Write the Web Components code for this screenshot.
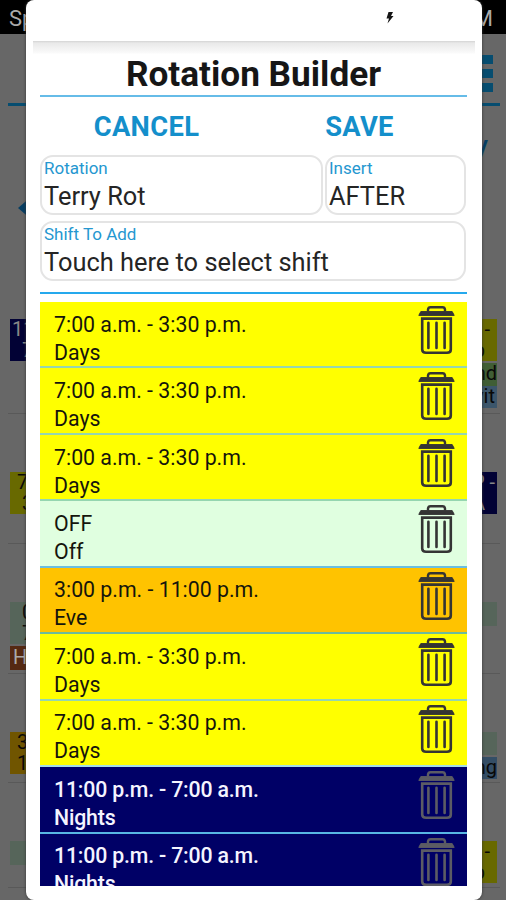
<!DOCTYPE html>
<html lang="en"><head><meta charset="utf-8"><title>Rotation Builder</title>
<style>html,body{margin:0;height:900px;overflow:hidden;background:#676767}body{font-family:Roboto,"Liberation Sans",sans-serif}</style></head>
<body>
<rotation-app></rotation-app>
<script>
class Base extends HTMLElement{
  connectedCallback(){ if(!this.shadowRoot) this.attachShadow({mode:'open'}).innerHTML=this.render(); }
  a(n,d=''){return this.getAttribute(n)??d}
}
customElements.define('trash-icon',class extends Base{render(){return `
<style>:host{display:block;width:38px;height:50px}svg{display:block}</style>
<svg width="38" height="50" viewBox="0 0 38 50" fill="none" stroke="currentColor">
<path d="M10 6.5V4.5Q10.3 2.2 12.5 2.2H24.5Q26.7 2.2 27 4.5V6.5" stroke-width="2.4"/>
<path d="M2.8 6.6H34.2L36.2 10.4H.8Z" fill="currentColor" stroke="currentColor" stroke-width="1"/>
<path d="M4.2 13.6H32.8V44.5Q32.8 47.8 29 47.8H8Q4.2 47.8 4.2 44.5Z" stroke-width="2.6"/>
<path d="M10.4 17.8V43M18.5 17.8V43M26.6 17.8V43" stroke-width="2.6" stroke-linecap="round"/>
</svg>`}});
customElements.define('shift-row',class extends Base{render(){return `
<style>:host{display:flex;justify-content:space-between;box-sizing:border-box;flex:none;height:66.45px;padding:3px 11px 0 14px;border-bottom:2px solid ${this.a('line','#95d6e0')};background:${this.a('bg')};color:${this.a('fg','#15150c')};font-size:21.3px;line-height:28px;font-weight:${this.a('weight','400')};letter-spacing:${this.a('ls','0')};white-space:nowrap}
.text{padding-top:5.7px}trash-icon{color:${this.a('icon','#343434')}}</style>
<div class="text"><div>${this.a('time')}</div><div>${this.a('name')}</div></div><trash-icon></trash-icon>`}});
customElements.define('form-field',class extends Base{render(){return `
<style>:host{display:block;box-sizing:border-box;height:60px;border:2px solid #e4e4e4;border-radius:13px;padding:1px 0 0 2px;white-space:nowrap;overflow:hidden}
.label{font-size:17px;line-height:20px;color:#2597d0}.value{font-size:25.4px;line-height:36px;color:#252525}</style>
<div class="label">${this.a('label')}</div><div class="value"><slot></slot></div>`}});
customElements.define('shift-chip',class extends Base{render(){return `
<style>:host{display:block;box-sizing:border-box;height:${this.a('h','42')}px;background:${this.a('bg')};color:${this.a('fg','#080808')};font-size:20px;line-height:21px;padding:0 2px;text-align:${this.a('align','left')};white-space:nowrap}
slot{display:block;white-space:pre}</style><slot></slot>`}});
customElements.define('week-row',class extends Base{render(){return `
<style>:host{display:flex;justify-content:space-between;box-sizing:border-box;height:${this.a('h')}px;margin:0 6px 0 8px;padding:${this.a('pt','58')}px 3px 0 2px;border-bottom:1px solid #595959}
div{display:flex;flex-direction:column;gap:2px;width:66px}</style>
<div><slot name="l"></slot></div><div><slot name="r"></slot></div>`}});
customElements.define('calendar-screen',class extends Base{render(){return `
<style>:host{display:block;height:900px;background:#676767}
.status{display:flex;justify-content:space-between;box-sizing:border-box;height:34px;background:#000;color:#aaa;font-size:22px;line-height:38px;padding:0 13px 0 9px}
.bar{display:flex;justify-content:flex-end;box-sizing:border-box;height:72px;margin:0 6px 0 8px;padding:21px 7px 0 0;border-bottom:3px solid #064d70}
.menu{display:flex;flex-direction:column;gap:5px;width:34px}.menu i{height:9px;background:#064d70}
.day{text-align:right;height:94px;color:#063e63;font-size:26px;line-height:30px;padding:24px 18px 0 0;box-sizing:border-box;font-weight:500}
.nav{height:60px;padding-left:18px}.nav svg{display:block}</style>
<div class="status"><span>Sp</span><span>M</span></div>
<div class="bar"><div class="menu"><i></i><i></i><i></i></div></div>
<div class="day">y</div>
<div class="nav"><svg width="14" height="16"><path d="M0 8 14 -4V20Z" fill="#063e63"/></svg></div>
<week-row h="154" pt="59">
<shift-chip slot="l" bg="#020235" fg="#888">11
  7</shift-chip>
<shift-chip slot="r" bg="#686900" align="right">- 
p  </shift-chip><shift-chip slot="r" h="23" bg="#405e35" align="right" style="padding:0">nd</shift-chip><shift-chip slot="r" h="22" bg="#3c566b" align="right" style="margin-top:-2px">vit</shift-chip></week-row>
<week-row h="130">
<shift-chip slot="l" bg="#686900"> 7
  3</shift-chip><shift-chip slot="r" bg="#020235" fg="#888" align="right">P -
A  </shift-chip></week-row>
<week-row h="130">
<shift-chip slot="l" bg="#56655a">  0
  7</shift-chip><shift-chip slot="l" h="24" bg="#552912" fg="#aaa" style="padding:1px 3px 0">H</shift-chip><shift-chip slot="r" h="24" bg="#56655a"></shift-chip></week-row>
<week-row h="109">
<shift-chip slot="l" bg="#705500"> 3
 1</shift-chip><shift-chip slot="r" h="23" bg="#56655a"></shift-chip><shift-chip slot="r" h="22" bg="#344e66" align="right" style="padding:0">ng</shift-chip></week-row>
<week-row h="105">
<shift-chip slot="l" h="24" bg="#56655a"></shift-chip><shift-chip slot="r" bg="#686900" align="right">- 
p  </shift-chip></week-row>`}});
customElements.define('rotation-dialog',class extends Base{render(){
const day=(l='#95d6b0')=>`<shift-row bg="#ffff00" line="${l}" time="7:00 a.m. - 3:30 p.m." name="Days"></shift-row>`;
const night=`<shift-row bg="#000066" fg="#f4f4ff" weight="500" ls="-.18px" icon="#5c5c64" line="#58b6e4" time="11:00 p.m. - 7:00 a.m." name="Nights"></shift-row>`;
return `
<style>:host{display:block;box-sizing:border-box;height:900px;background:#fff;border-radius:8px;overflow:hidden;box-shadow:0 0 3px #333}
.top{height:41px;box-sizing:border-box;padding:12px 0 0 360px}.top svg{display:block}
.shade{height:13px;margin:0 7px;background:linear-gradient(#d4d4d4 0,#e9e9e9 2px,#fafafa 12px,#fff)}
.body{margin:0 15px 0 14px}
h1{margin:0;height:43px;box-sizing:border-box;border-bottom:2px solid #66bce8;text-align:center;font-size:35.2px;font-weight:700;line-height:40px;color:#161616;white-space:nowrap}
.actions{display:grid;grid-template-columns:213px 213px;height:58px;text-align:center;line-height:61px;font-size:27.3px;letter-spacing:.35px;font-weight:700;color:#148fcb}
.fields{display:grid;grid-template-columns:283px 141px;gap:6px 2px;padding:0 0 11px 0}
.wide{grid-column:1/3}
.list{height:594px;box-sizing:border-box;border-top:2px solid #25a9ed;padding-top:8px;overflow:hidden;display:flex;flex-direction:column}</style>
<div class="top"><svg width="8" height="12" viewBox="0 0 8 12"><path d="M2.5 0H7L5 4H7.5L1.5 11.5 3 6.5H.5Z" fill="#151515"/></svg></div>
<div class="shade"></div>
<div class="body"><h1>Rotation Builder</h1>
<div class="actions"><span>CANCEL</span><span>SAVE</span></div>
<div class="fields"><form-field label="Rotation">Terry Rot</form-field><form-field label="Insert">AFTER</form-field><form-field class="wide" label="Shift To Add">Touch here to select shift</form-field></div>
<div class="list">${day()}${day()}${day()}<shift-row bg="#e0ffe0" line="#69bde2" time="OFF" name="Off"></shift-row><shift-row bg="#ffc300" line="#6cbb9d" time="3:00 p.m. - 11:00 p.m." name="Eve"></shift-row>${day()}${day('#a5dfe5')}${night}${night}</div></div>`}});
customElements.define('rotation-app',class extends Base{render(){return `
<style>:host{display:block;position:relative;width:506px;height:900px;overflow:hidden}
rotation-dialog{position:absolute;left:26px;top:0;width:456px}</style>
<calendar-screen></calendar-screen><rotation-dialog></rotation-dialog>`}});
</script>
</body></html>
